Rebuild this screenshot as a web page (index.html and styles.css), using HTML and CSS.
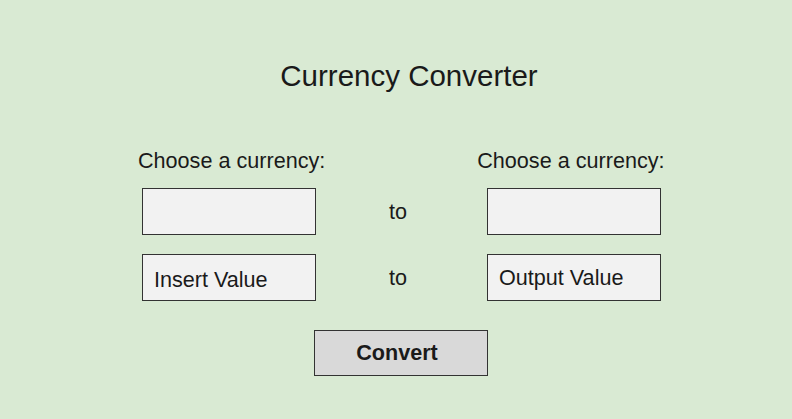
FILE: index.html
```html
<!DOCTYPE html>
<html lang="en">
<head>
<meta charset="utf-8">
<title>Currency Converter</title>
<link rel="stylesheet" href="styles.css">
</head>
<body>
<main class="app">
  <h1 class="title">Currency Converter</h1>
  <div class="labels">
    <span class="label label-left">Choose a currency:</span>
    <span class="label label-right">Choose a currency:</span>
  </div>
  <div class="row row-select">
    <div class="box"></div>
    <div class="to">to</div>
    <div class="box"></div>
  </div>
  <div class="row row-value">
    <div class="box value insert">Insert Value</div>
    <div class="to">to</div>
    <div class="box value">Output Value</div>
  </div>
  <div class="actions">
    <button class="convert" type="button">Convert</button>
  </div>
</main>
</body>
</html>
```
FILE: styles.css
```css
html, body {
  margin: 0;
  padding: 0;
}
body {
  background: #d9ead3;
  font-family: "Liberation Sans", Arial, sans-serif;
  color: #1a1a1a;
  width: 792px;
  height: 419px;
  overflow: hidden;
}
.app {
  display: flex;
  flex-direction: column;
}
.title {
  margin: 59px 0 0 0;
  padding-left: 26px;
  text-align: center;
  font-size: 29.5px;
  font-weight: normal;
  line-height: 34px;
}
.labels {
  display: flex;
  margin-top: 55px;
  font-size: 21.6px;
  line-height: 25px;
}
.label-left {
  margin-left: 138px;
}
.label-right {
  margin-left: 152px;
}
.row {
  display: flex;
  margin-left: 142px;
  font-size: 21.6px;
}
.row-select {
  margin-top: 15px;
}
.row-value {
  margin-top: 19px;
}
.box {
  box-sizing: border-box;
  width: 174px;
  height: 47px;
  background: #f2f2f2;
  border: 1px solid #333333;
}
.value {
  display: flex;
  align-items: center;
  padding-left: 11px;
  line-height: 25px;
}
.insert {
  padding-top: 3px;
}
.to {
  width: 171px;
  display: flex;
  align-items: center;
  justify-content: center;
  padding-right: 7px;
  box-sizing: border-box;
}
.actions {
  display: flex;
  margin-top: 29px;
  margin-left: 314px;
}
.convert {
  box-sizing: border-box;
  width: 174px;
  height: 46px;
  padding: 0 8px 0 0;
  background: #d9d9d9;
  border: 1px solid #333333;
  border-radius: 0;
  font-family: "Liberation Sans", Arial, sans-serif;
  font-size: 21.6px;
  font-weight: bold;
  color: #1a1a1a;
}
```
